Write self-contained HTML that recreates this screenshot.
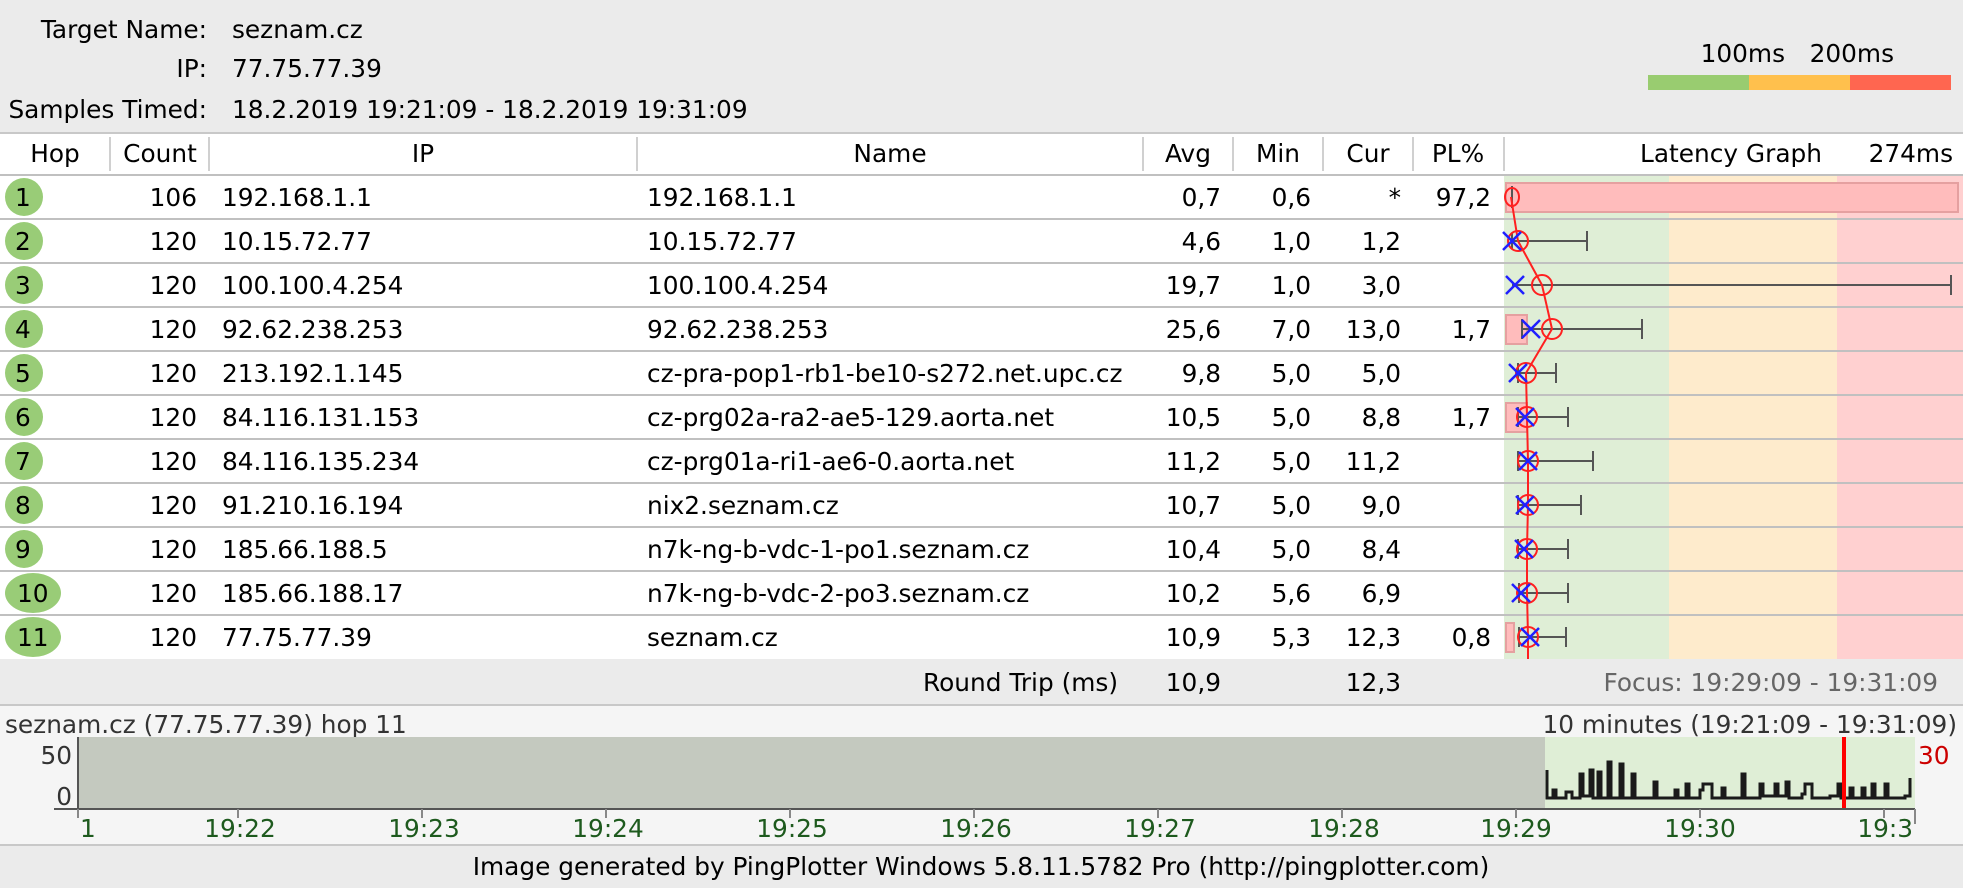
<!DOCTYPE html>
<html><head><meta charset="utf-8"><style>
html,body{margin:0;padding:0;background:#ebebeb;}
svg{display:block;}
text{font-family:"DejaVu Sans","Liberation Sans",sans-serif;font-size:24.8px;fill:#000;}
.r{text-anchor:end}.c{text-anchor:middle}
</style></head><body>
<svg width="1963" height="888" viewBox="0 0 1963 888" xmlns="http://www.w3.org/2000/svg">
<rect x="0" y="0" width="1963" height="888" fill="#ebebeb"/>
<text x="207" y="38" class="r">Target Name:</text><text x="232" y="38">seznam.cz</text>
<text x="207" y="77" class="r">IP:</text><text x="232" y="77">77.75.77.39</text>
<text x="207" y="118" class="r">Samples Timed:</text><text x="232" y="118">18.2.2019 19:21:09 - 18.2.2019 19:31:09</text>
<text x="1785" y="62" class="r">100ms</text><text x="1894" y="62" class="r">200ms</text>
<rect x="1648" y="75" width="101" height="15" fill="#99cc70"/>
<rect x="1749" y="75" width="101" height="15" fill="#ffc04d"/>
<rect x="1850" y="75" width="101" height="15" fill="#ff6650"/>
<rect x="0" y="133" width="1963" height="526" fill="#fff"/>
<line x1="0" y1="133" x2="1963" y2="133" stroke="#c8c8c8" stroke-width="2"/>
<line x1="0" y1="175" x2="1963" y2="175" stroke="#c0c0c0" stroke-width="2"/>
<g stroke="#d0d0d0" stroke-width="2">
<line x1="110" y1="137" x2="110" y2="171"/><line x1="209" y1="137" x2="209" y2="171"/>
<line x1="637" y1="137" x2="637" y2="171"/><line x1="1143" y1="137" x2="1143" y2="171"/>
<line x1="1233" y1="137" x2="1233" y2="171"/><line x1="1323" y1="137" x2="1323" y2="171"/>
<line x1="1413" y1="137" x2="1413" y2="171"/><line x1="1504" y1="137" x2="1504" y2="171"/>
</g>
<text x="55" y="162" class="c">Hop</text><text x="160" y="162" class="c">Count</text>
<text x="423" y="162" class="c">IP</text><text x="890" y="162" class="c">Name</text>
<text x="1188" y="162" class="c">Avg</text><text x="1278" y="162" class="c">Min</text>
<text x="1368" y="162" class="c">Cur</text><text x="1458" y="162" class="c">PL%</text>
<text x="1731" y="162" class="c">Latency Graph</text><text x="1953" y="162" class="r">274ms</text>
<rect x="1504" y="176" width="165" height="483" fill="#dfeed6"/>
<rect x="1669" y="176" width="168" height="483" fill="#feebcc"/>
<rect x="1837" y="176" width="126" height="483" fill="#ffd0d0"/>
<g stroke="#c0c0c0" stroke-width="2">
<line x1="0" y1="219" x2="1963" y2="219"/><line x1="0" y1="263" x2="1963" y2="263"/>
<line x1="0" y1="307" x2="1963" y2="307"/><line x1="0" y1="351" x2="1963" y2="351"/>
<line x1="0" y1="395" x2="1963" y2="395"/><line x1="0" y1="439" x2="1963" y2="439"/>
<line x1="0" y1="483" x2="1963" y2="483"/><line x1="0" y1="527" x2="1963" y2="527"/>
<line x1="0" y1="571" x2="1963" y2="571"/><line x1="0" y1="615" x2="1963" y2="615"/>
</g>
<g fill="#99cc77">
<ellipse cx="24" cy="197" rx="19" ry="19"/><ellipse cx="24" cy="241" rx="19" ry="19"/>
<ellipse cx="24" cy="285" rx="19" ry="19"/><ellipse cx="24" cy="329" rx="19" ry="19"/>
<ellipse cx="24" cy="373" rx="19" ry="19"/><ellipse cx="24" cy="417" rx="19" ry="19"/>
<ellipse cx="24" cy="461" rx="19" ry="19"/><ellipse cx="24" cy="505" rx="19" ry="19"/>
<ellipse cx="24" cy="549" rx="19" ry="19"/><ellipse cx="33" cy="593" rx="28" ry="20"/>
<ellipse cx="33" cy="637" rx="28" ry="20"/>
</g>
<g>
<text x="15" y="206">1</text><text x="15" y="250">2</text><text x="15" y="294">3</text>
<text x="15" y="338">4</text><text x="15" y="382">5</text><text x="15" y="426">6</text>
<text x="15" y="470">7</text><text x="15" y="514">8</text><text x="15" y="558">9</text>
<text x="17" y="602">10</text><text x="17" y="646">11</text>
</g>
<g>
<text x="197" y="206" class="r">106</text><text x="222" y="206">192.168.1.1</text><text x="647" y="206">192.168.1.1</text><text x="1221" y="206" class="r">0,7</text><text x="1311" y="206" class="r">0,6</text><text x="1401" y="206" class="r">*</text><text x="1491" y="206" class="r">97,2</text>
<text x="197" y="250" class="r">120</text><text x="222" y="250">10.15.72.77</text><text x="647" y="250">10.15.72.77</text><text x="1221" y="250" class="r">4,6</text><text x="1311" y="250" class="r">1,0</text><text x="1401" y="250" class="r">1,2</text>
<text x="197" y="294" class="r">120</text><text x="222" y="294">100.100.4.254</text><text x="647" y="294">100.100.4.254</text><text x="1221" y="294" class="r">19,7</text><text x="1311" y="294" class="r">1,0</text><text x="1401" y="294" class="r">3,0</text>
<text x="197" y="338" class="r">120</text><text x="222" y="338">92.62.238.253</text><text x="647" y="338">92.62.238.253</text><text x="1221" y="338" class="r">25,6</text><text x="1311" y="338" class="r">7,0</text><text x="1401" y="338" class="r">13,0</text><text x="1491" y="338" class="r">1,7</text>
<text x="197" y="382" class="r">120</text><text x="222" y="382">213.192.1.145</text><text x="647" y="382">cz-pra-pop1-rb1-be10-s272.net.upc.cz</text><text x="1221" y="382" class="r">9,8</text><text x="1311" y="382" class="r">5,0</text><text x="1401" y="382" class="r">5,0</text>
<text x="197" y="426" class="r">120</text><text x="222" y="426">84.116.131.153</text><text x="647" y="426">cz-prg02a-ra2-ae5-129.aorta.net</text><text x="1221" y="426" class="r">10,5</text><text x="1311" y="426" class="r">5,0</text><text x="1401" y="426" class="r">8,8</text><text x="1491" y="426" class="r">1,7</text>
<text x="197" y="470" class="r">120</text><text x="222" y="470">84.116.135.234</text><text x="647" y="470">cz-prg01a-ri1-ae6-0.aorta.net</text><text x="1221" y="470" class="r">11,2</text><text x="1311" y="470" class="r">5,0</text><text x="1401" y="470" class="r">11,2</text>
<text x="197" y="514" class="r">120</text><text x="222" y="514">91.210.16.194</text><text x="647" y="514">nix2.seznam.cz</text><text x="1221" y="514" class="r">10,7</text><text x="1311" y="514" class="r">5,0</text><text x="1401" y="514" class="r">9,0</text>
<text x="197" y="558" class="r">120</text><text x="222" y="558">185.66.188.5</text><text x="647" y="558">n7k-ng-b-vdc-1-po1.seznam.cz</text><text x="1221" y="558" class="r">10,4</text><text x="1311" y="558" class="r">5,0</text><text x="1401" y="558" class="r">8,4</text>
<text x="197" y="602" class="r">120</text><text x="222" y="602">185.66.188.17</text><text x="647" y="602">n7k-ng-b-vdc-2-po3.seznam.cz</text><text x="1221" y="602" class="r">10,2</text><text x="1311" y="602" class="r">5,6</text><text x="1401" y="602" class="r">6,9</text>
<text x="197" y="646" class="r">120</text><text x="222" y="646">77.75.77.39</text><text x="647" y="646">seznam.cz</text><text x="1221" y="646" class="r">10,9</text><text x="1311" y="646" class="r">5,3</text><text x="1401" y="646" class="r">12,3</text><text x="1491" y="646" class="r">0,8</text>
</g>
<g fill="#ffbcbc" stroke="#e5a0a0" stroke-width="2">
<rect x="1506" y="183" width="452" height="29"/>
<rect x="1506" y="315" width="21" height="29"/>
<rect x="1506" y="403" width="21" height="29"/>
<rect x="1506" y="623" width="8" height="29"/>
</g>
<g stroke="#555" stroke-width="2" fill="none">
<path d="M1512,186V208"/>
<path d="M1512,241H1587M1587,231V251M1512,233V249"/>
<path d="M1512,285H1951M1951,275V295"/>
<path d="M1522,329H1642M1522,319V339M1642,319V339"/>
<path d="M1518,373H1556M1518,363V383M1556,363V383"/>
<path d="M1518,417H1568M1518,407V427M1568,407V427"/>
<path d="M1518,461H1593M1518,451V471M1593,451V471"/>
<path d="M1518,505H1581M1518,495V515M1581,495V515"/>
<path d="M1518,549H1568M1518,539V559M1568,539V559"/>
<path d="M1519,593H1568M1519,583V603M1568,583V603"/>
<path d="M1519,637H1566M1519,627V647M1566,627V647"/>
</g>
<polyline points="1511,197 1518,241 1542,285 1552,329 1526,373 1527,417 1528,461 1528,505 1527,549 1527,593 1528,637 1528,659" fill="none" stroke="#ff2020" stroke-width="2"/>
<g fill="none" stroke="#ff2020" stroke-width="2">
<ellipse cx="1512" cy="197" rx="7" ry="9"/>
<circle cx="1518" cy="241" r="10"/><circle cx="1542" cy="285" r="10"/><circle cx="1552" cy="329" r="10"/>
<circle cx="1526" cy="373" r="10"/><circle cx="1527" cy="417" r="10"/><circle cx="1528" cy="461" r="10"/>
<circle cx="1528" cy="505" r="10"/><circle cx="1527" cy="549" r="10"/><circle cx="1527" cy="593" r="10"/>
<circle cx="1528" cy="637" r="10"/>
</g>
<g stroke="#2020ff" stroke-width="2.5">
<path d="M1503,232l18,18M1503,250l18,-18"/>
<path d="M1506,276l18,18M1506,294l18,-18"/>
<path d="M1522,320l18,18M1522,338l18,-18"/>
<path d="M1509,364l18,18M1509,382l18,-18"/>
<path d="M1516,408l18,18M1516,426l18,-18"/>
<path d="M1519,452l18,18M1519,470l18,-18"/>
<path d="M1516,496l18,18M1516,514l18,-18"/>
<path d="M1515,540l18,18M1515,558l18,-18"/>
<path d="M1512,584l18,18M1512,602l18,-18"/>
<path d="M1521,628l18,18M1521,646l18,-18"/>
</g>
<text x="1118" y="691" class="r">Round Trip (ms)</text>
<text x="1221" y="691" class="r">10,9</text><text x="1401" y="691" class="r">12,3</text>
<text x="1938" y="691" class="r" style="fill:#666">Focus: 19:29:09 - 19:31:09</text>
<rect x="0" y="705" width="1963" height="140" fill="#f5f5f5"/>
<line x1="0" y1="705" x2="1963" y2="705" stroke="#c8c8c8" stroke-width="2"/>
<line x1="0" y1="845" x2="1963" y2="845" stroke="#c8c8c8" stroke-width="2"/>
<text x="5" y="733" style="fill:#333">seznam.cz (77.75.77.39) hop 11</text>
<text x="1957" y="733" class="r" style="fill:#333">10 minutes (19:21:09 - 19:31:09)</text>
<rect x="78" y="737" width="1467" height="72" fill="#c4c9bf"/>
<rect x="1545" y="737" width="370" height="72" fill="#dfeed6"/>
<path d="M1547,770V798H1553V790H1556V798H1566V792H1572V798H1580V774H1583V796H1590V770H1593V798H1598V772H1601V798H1608V762H1611V798H1620V764H1623V798H1632V774H1635V798H1654V782H1657V798H1675V790H1678V798H1686V784H1689V798H1700V790H1703V784H1712V798H1722V788H1725V798H1742V774H1745V798H1760V784H1763V796H1775V784H1778V796H1786V782H1789V798H1802V794H1805V784H1812V798H1830V796H1838V784H1841V798H1850V788H1853V798H1862V788H1865V798H1872V784H1875V798H1885V784H1888V798H1905V796H1910V778" fill="none" stroke="#1a1a1a" stroke-width="3"/>
<line x1="1844" y1="737" x2="1844" y2="809" stroke="#ff0000" stroke-width="4"/>
<text x="1918" y="764" style="fill:#cc0000">30</text>
<line x1="78" y1="737" x2="78" y2="810" stroke="#555" stroke-width="2"/>
<line x1="54" y1="809" x2="1915" y2="809" stroke="#555" stroke-width="2"/>
<text x="72" y="764" class="r" style="fill:#333">50</text>
<text x="72" y="805" class="r" style="fill:#333">0</text>
<g stroke="#888" stroke-width="2">
<line x1="78" y1="809" x2="78" y2="818"/><line x1="238" y1="809" x2="238" y2="818"/><line x1="422" y1="809" x2="422" y2="818"/>
<line x1="606" y1="809" x2="606" y2="818"/><line x1="790" y1="809" x2="790" y2="818"/><line x1="974" y1="809" x2="974" y2="818"/>
<line x1="1158" y1="809" x2="1158" y2="818"/><line x1="1342" y1="809" x2="1342" y2="818"/><line x1="1516" y1="809" x2="1516" y2="818"/>
<line x1="1700" y1="809" x2="1700" y2="818"/><line x1="1884" y1="809" x2="1884" y2="818"/><line x1="1915" y1="809" x2="1915" y2="824"/>
</g>
<g>
<text x="80" y="837" style="fill:#1e5a1e">1</text>
<text x="240" y="837" class="c" style="fill:#1e5a1e">19:22</text><text x="424" y="837" class="c" style="fill:#1e5a1e">19:23</text>
<text x="608" y="837" class="c" style="fill:#1e5a1e">19:24</text><text x="792" y="837" class="c" style="fill:#1e5a1e">19:25</text>
<text x="976" y="837" class="c" style="fill:#1e5a1e">19:26</text><text x="1160" y="837" class="c" style="fill:#1e5a1e">19:27</text>
<text x="1344" y="837" class="c" style="fill:#1e5a1e">19:28</text><text x="1516" y="837" class="c" style="fill:#1e5a1e">19:29</text>
<text x="1700" y="837" class="c" style="fill:#1e5a1e">19:30</text><text x="1913" y="837" class="r" style="fill:#1e5a1e">19:3</text>
</g>
<text x="981" y="875" class="c">Image generated by PingPlotter Windows 5.8.11.5782 Pro (http://pingplotter.com)</text>
</svg>
</body></html>
